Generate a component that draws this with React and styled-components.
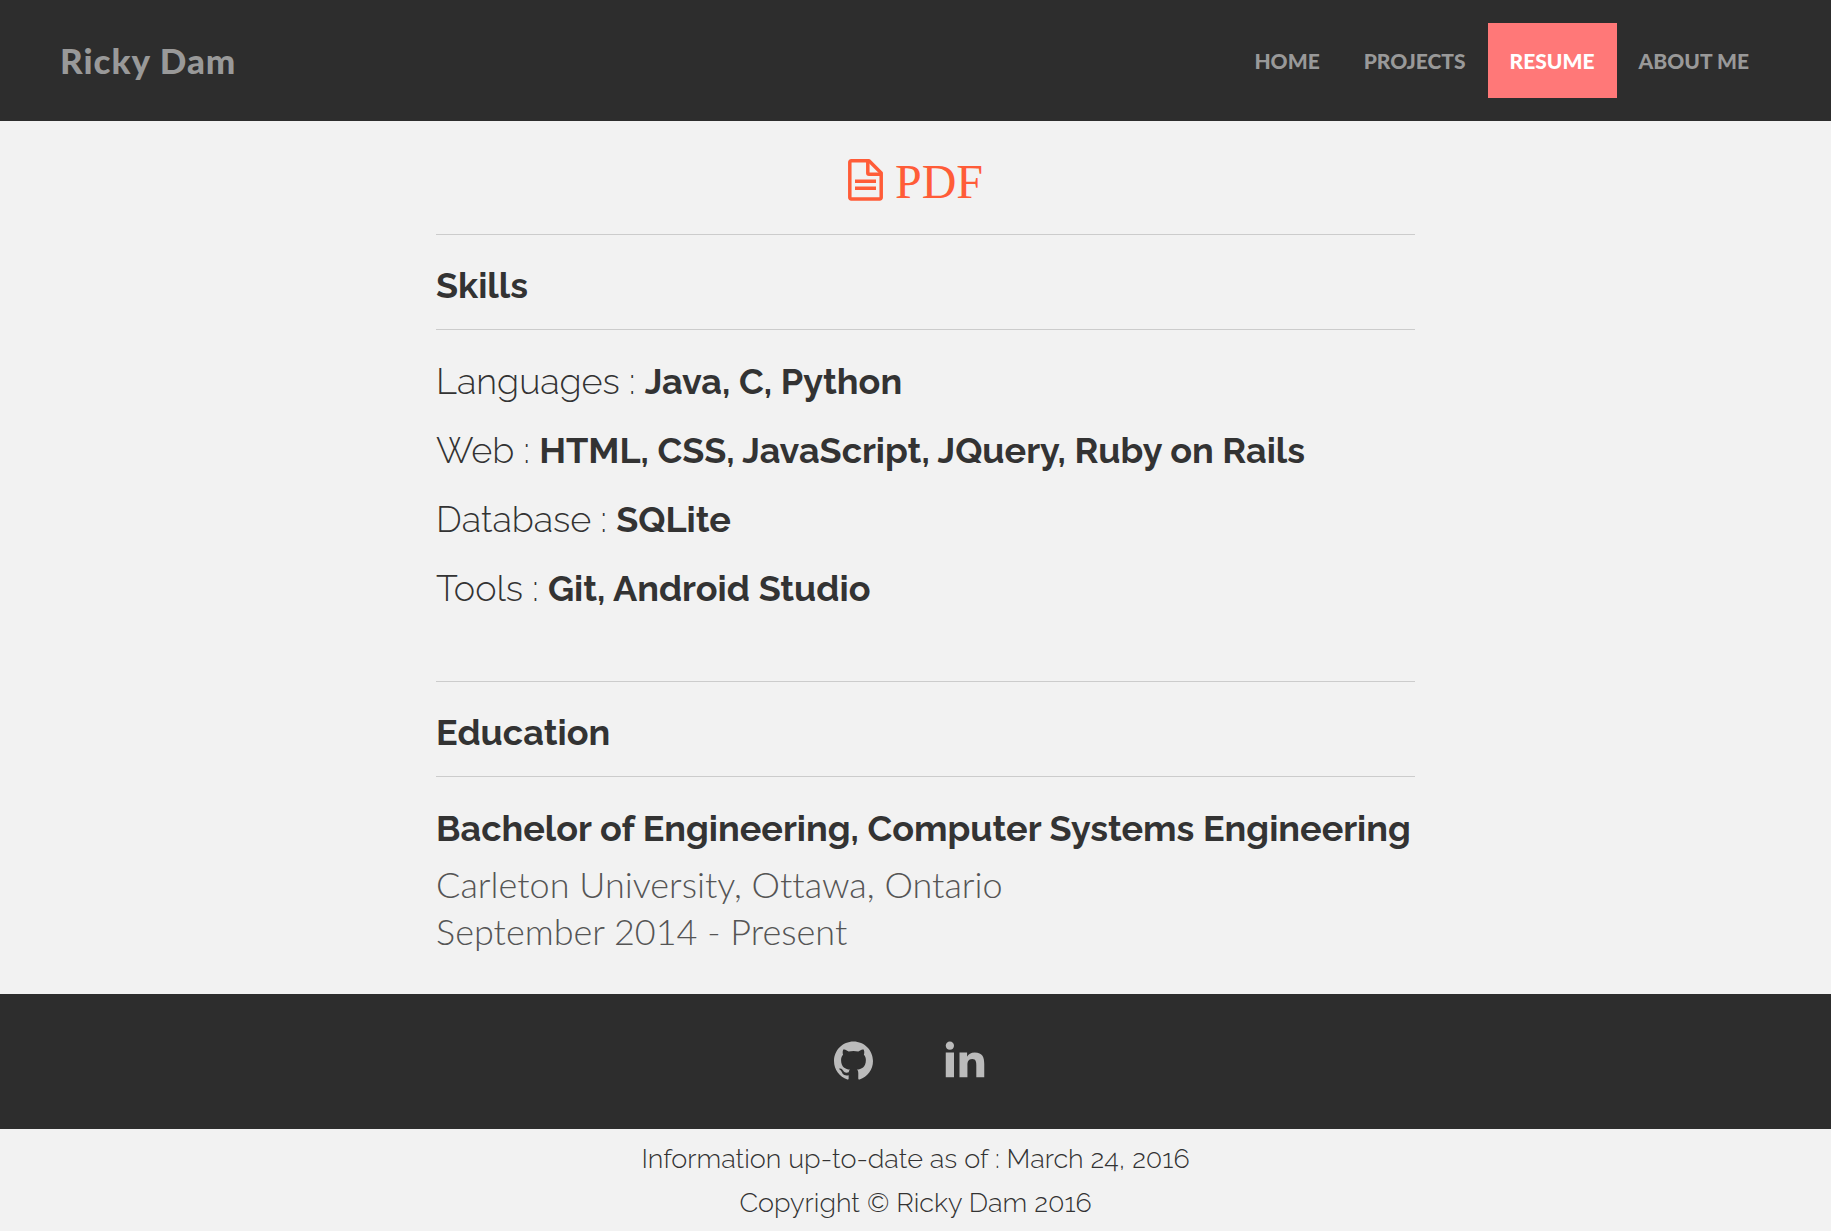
import React from "react";
import styled, { createGlobalStyle } from "styled-components";
import { ImLinkedin2 } from "react-icons/im";
import { SiGithub } from "react-icons/si";

const GlobalStyle = createGlobalStyle`
  *, *::before, *::after { box-sizing: border-box; }
  body {
    margin: 0;
    background: #f2f2f2;
    color: #333;
    font-family: "Raleway", "Open Sans", sans-serif;
  }
`;

const Header = styled.header`
  display: flex;
  align-items: center;
  justify-content: space-between;
  padding: 23px 60px;
  background: #2d2d2d;
  font-family: "Lato", "Open Sans", sans-serif;
`;

const Brand = styled.a`
  padding-bottom: 2px;
  color: #999;
  font-size: 35px;
  font-weight: 900;
  letter-spacing: 1px;
  line-height: 42px;
  text-decoration: none;
`;

const NavList = styled.ul`
  display: flex;
  margin: 0;
  padding: 0;
  list-style: none;
`;

const NavLink = styled.a`
  display: block;
  padding: 0 22px;
  background: ${({ $active }) => ($active ? "#ff7878" : "transparent")};
  color: ${({ $active }) => ($active ? "#fff" : "#999")};
  font-size: 21px;
  font-weight: 900;
  line-height: 75px;
  text-decoration: none;
  text-transform: uppercase;
`;

const PdfRow = styled.div`
  display: flex;
  justify-content: center;
  padding: 33px 0 25px;
`;

const PdfLink = styled.a`
  display: flex;
  align-items: center;
  gap: 12px;
  color: #ff5c38;
  font-family: "Liberation Serif", serif;
  font-size: 48px;
  line-height: 55px;
  text-decoration: none;
`;

const Content = styled.main`
  width: fit-content;
  margin: 0 auto;
  padding: 0 0 39px 20px;
`;

const Section = styled.section`
  & + & {
    margin-top: 72px;
  }
`;

const SectionTitle = styled.h2`
  margin: 0 0 30px;
  padding: 29px 0 23px;
  border: solid #ccc;
  border-width: 1px 0;
  font-size: 36px;
  font-weight: 700;
  line-height: 42px;
`;

const SkillList = styled.ul`
  display: grid;
  gap: 27px;
  margin: 0;
  padding: 0;
  list-style: none;
`;

const Skill = styled.li`
  font-size: 36px;
  font-weight: 300;
  line-height: 42px;

  strong {
    font-weight: 700;
  }
`;

const Degree = styled.h3`
  margin: 0 0 12px;
  padding-right: 4px;
  font-size: 36px;
  font-weight: 700;
  line-height: 42px;
`;

const Detail = styled.p`
  margin: 0;
  color: #555;
  font-family: "Lato", "Open Sans", sans-serif;
  font-size: 36px;
  font-weight: 300;
  font-variant-ligatures: none;
  line-height: 47px;
`;

const SocialBar = styled.div`
  display: flex;
  align-items: flex-end;
  justify-content: center;
  gap: 70px;
  padding: 42px 10px 49px 0;
  background: #2d2d2d;
`;

const SocialLink = styled.a`
  display: flex;
  color: #bbb;
`;

const Legal = styled.div`
  padding: 8px 0;
  font-size: 27px;
  font-weight: 300;
  line-height: 44px;
  text-align: center;

  p {
    margin: 0;
  }
`;

const NAV = ["Home", "Projects", "Resume", "About me"];

const SKILLS = [
  ["Languages", "Java, C, Python"],
  ["Web", "HTML, CSS, JavaScript, JQuery, Ruby on Rails"],
  ["Database", "SQLite"],
  ["Tools", "Git, Android Studio"],
];

function FileIcon() {
  return (
    <svg width="35" height="45" viewBox="0 0 35 45" fill="none" stroke="currentColor" strokeWidth="3.5" aria-hidden="true">
      <path d="M3 1.8H21L33.2 14V38.6a1.4 1.4 0 0 1-1.4 1.4H3.2a1.4 1.4 0 0 1-1.4-1.4V3.2A1.4 1.4 0 0 1 3.2 1.8Z" strokeLinejoin="round" />
      <path d="M19.8 2V14a1.2 1.2 0 0 0 1.2 1.2H33M7 22.3H28M7 29.3H28" />
    </svg>
  );
}

export default function App() {
  return (
    <>
      <GlobalStyle />
      <Header>
        <Brand href="#home">Ricky Dam</Brand>
        <nav>
          <NavList>
            {NAV.map((label) => (
              <li key={label}>
                <NavLink href="#" $active={label === "Resume"}>{label}</NavLink>
              </li>
            ))}
          </NavList>
        </nav>
      </Header>

      <PdfRow>
        <PdfLink href="#pdf">
          <FileIcon />
          PDF
        </PdfLink>
      </PdfRow>

      <Content>
        <Section>
          <SectionTitle>Skills</SectionTitle>
          <SkillList>
            {SKILLS.map(([name, items]) => (
              <Skill key={name}>
                {name} : <strong>{items}</strong>
              </Skill>
            ))}
          </SkillList>
        </Section>
        <Section>
          <SectionTitle>Education</SectionTitle>
          <Degree>Bachelor of Engineering, Computer Systems Engineering</Degree>
          <Detail>Carleton University, Ottawa, Ontario</Detail>
          <Detail>September 2014 - Present</Detail>
        </Section>
      </Content>

      <footer>
        <SocialBar>
          <SocialLink href="#github" aria-label="GitHub">
            <SiGithub size={39} />
          </SocialLink>
          <SocialLink href="#linkedin" aria-label="LinkedIn">
            <ImLinkedin2 size={44} />
          </SocialLink>
        </SocialBar>
        <Legal>
          <p>Information up-to-date as of : March 24, 2016</p>
          <p>Copyright © Ricky Dam 2016</p>
        </Legal>
      </footer>
    </>
  );
}
